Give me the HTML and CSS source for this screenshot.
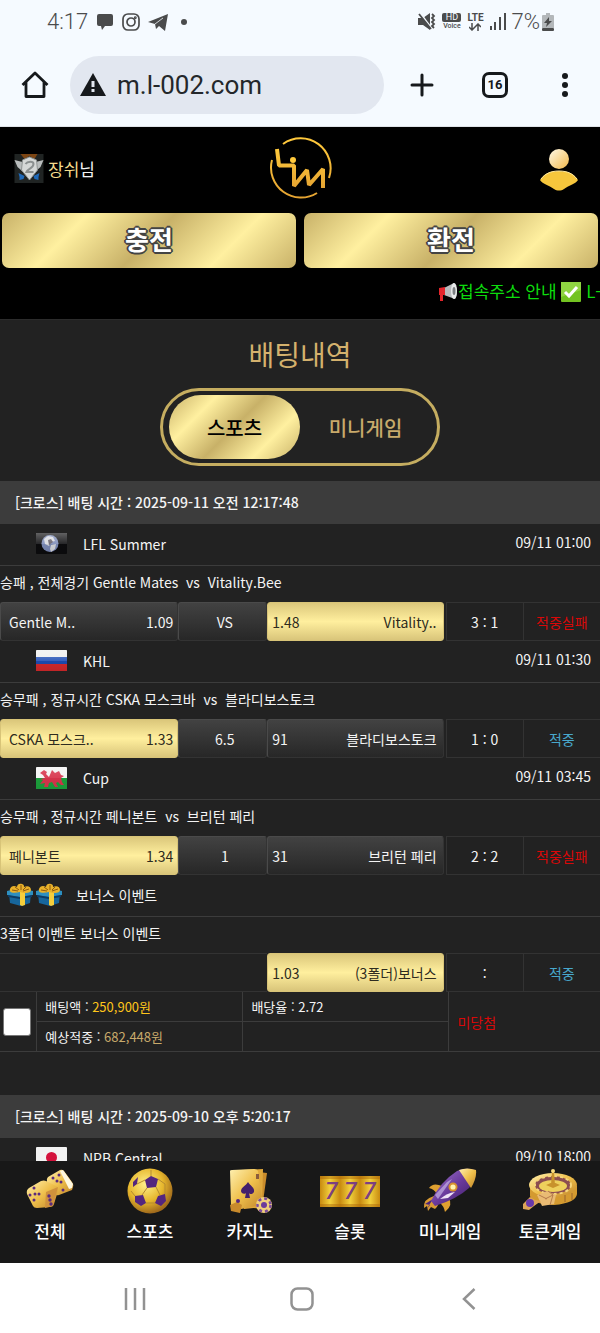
FILE: index.html
```
<!DOCTYPE html>
<html lang="ko">
<head>
  <meta charset="utf-8">
  <title>배팅내역</title>
  <meta name="viewport" content="width=device-width, initial-scale=1">
  <link rel="stylesheet" href="styles.css">
</head>
<body>
  <!-- shared gradients and symbols -->
  <svg class="defs" width="0" height="0" aria-hidden="true">
    <defs>
      <linearGradient id="gold" x1="0" y1="0" x2="1" y2="1">
        <stop offset="0" stop-color="#fff0b0"/><stop offset=".5" stop-color="#efc04c"/><stop offset="1" stop-color="#c0842a"/>
      </linearGradient>
      <linearGradient id="head" x1="0" y1="0" x2="1" y2="1">
        <stop offset="0" stop-color="#fffae8"/><stop offset="1" stop-color="#f2b84a"/>
      </linearGradient>
      <linearGradient id="logo-gold" x1="0" y1="0" x2="0" y2="1">
        <stop offset="0" stop-color="#ffc93c"/><stop offset="1" stop-color="#e5a432"/>
      </linearGradient>
      <linearGradient id="purple" x1="0" y1="0" x2="1" y2="1">
        <stop offset="0" stop-color="#a27bd0"/><stop offset=".5" stop-color="#6a3a9c"/><stop offset="1" stop-color="#3a1a60"/>
      </linearGradient>
      <radialGradient id="ball" cx=".4" cy=".35" r=".65">
        <stop offset="0" stop-color="#fff08a"/><stop offset=".6" stop-color="#e6b62c"/><stop offset="1" stop-color="#a06a1c"/>
      </radialGradient>
      <linearGradient id="slot" x1="0" y1="0" x2="1" y2="0">
        <stop offset="0" stop-color="#c88a10"/><stop offset=".5" stop-color="#f2d03c"/><stop offset="1" stop-color="#c88a10"/>
      </linearGradient>
      <linearGradient id="shine" x1="0" y1="0" x2="0" y2="1">
        <stop offset="0" stop-color="#fff" stop-opacity=".35"/><stop offset=".5" stop-color="#fff" stop-opacity=".12"/><stop offset=".52" stop-color="#000" stop-opacity=".05"/><stop offset="1" stop-color="#000" stop-opacity=".12"/>
      </linearGradient>
      <symbol id="gift" viewBox="0 0 28 23">
        <path d="M3 10h22l-1 10-9 3-11-3z" fill="#17669c"/>
        <path d="M1 8l13-3 13 3v4l-13 2-13-2z" fill="#2d8fc0"/>
        <path d="M2 12l12 2 12-2v2l-12 2-12-2z" fill="#0c3c66"/>
        <path d="M14 9h5v13l-3 1-2-1z" fill="#f5ce3c"/>
        <path d="M14 9C6 11 3 9 4 6s4-4 7-2C11 1 14 0 16 1s2 1 2 3c4-2 7 0 7 3s-5 4-11 2z" fill="#e8b12a"/>
        <path d="M6 7l6 1M23 6l-6 2M15 2v5M9 4l4 3M20 4l-3 3" stroke="#8e5a10" fill="none"/>
      </symbol>
    </defs>
  </svg>

  <div class="status-bar">
    <div class="status-left">
      <span class="clock">4:17</span>
      <svg width="18" height="18" viewBox="0 0 18 18"><path d="M3 1h12a2 2 0 0 1 2 2v8a2 2 0 0 1-2 2H9l-3 4-1-4H3a2 2 0 0 1-2-2V3a2 2 0 0 1 2-2z" fill="#4a4b4c"/></svg>
      <svg width="18" height="18" viewBox="0 0 18 18" fill="none" stroke="#4a4b4c" stroke-width="1.7"><rect x="1" y="1" width="16" height="16" rx="5"/><circle cx="9" cy="9" r="4"/><circle cx="13.3" cy="4.7" r=".6"/></svg>
      <svg width="20" height="18" viewBox="0 0 20 18"><path d="M0 9L20 1l-3 17-6-5-3 3-1-5z" fill="#4a4b4c"/><path d="M7 11l8-6" stroke="#f5faff" stroke-width=".8"/></svg>
      <span class="more-dot"></span>
    </div>
    <div class="status-right">
      <svg width="18" height="17" viewBox="0 0 18 17"><path d="M0 5h5l7-5v17l-7-5H0z" fill="#4a4b4c"/><path d="M2 0l12 16" stroke="#f5faff" stroke-width="2"/><path d="M1 1l12 15" stroke="#4a4b4c" stroke-width="1.8"/><path d="M14 1l2 2-2 2 2 2-2 2 2 2-2 2 2 2" fill="none" stroke="#4a4b4c" stroke-width="1.8"/></svg>
      <span class="hd"><b>HD</b><i>Voice</i></span>
      <span class="lte"><b>LTE</b><svg width="12" height="8" viewBox="0 0 12 8" fill="none" stroke="#4a4b4c" stroke-width="1.5"><path d="M3 0v7M0 4l3 3 3-3M9 8V1M6 4l3-3 3 3"/></svg></span>
      <svg width="16" height="17" viewBox="0 0 16 17" fill="#4a4b4c"><rect x="0" y="13" width="2" height="4"/><rect x="4" y="9" width="2" height="8"/><rect x="9" y="4" width="2" height="13"/><rect x="14" y="0" width="2" height="17"/></svg>
      <span class="percent">7%</span>
      <svg width="12" height="18" viewBox="0 0 12 18"><path d="M4 0h4v2h3a1 1 0 0 1 1 1v12H0V3a1 1 0 0 1 1-1h3z" fill="#b3b7ba"/><path d="M7 4L2 10h3l-1 4 6-6H7z" fill="#4a4b4c"/><rect y="15" width="12" height="3" rx="1" fill="#4a4b4c"/></svg>
    </div>
  </div>

  <div class="toolbar">
    <button class="tool home" aria-label="Home"><svg width="28" height="28" viewBox="0 0 28 28" fill="none" stroke="#16191c" stroke-width="2.8" stroke-linejoin="round"><path d="M1.500 14L14 2l12.500 12M5 11v14.500h18V11"/></svg></button>
    <div class="omnibox">
      <svg width="26" height="23" viewBox="0 0 26 23"><path d="M13 0l13 23H0z" fill="#16191c"/><path d="M13 8v6M13 16v3" stroke="#e2e7f0" stroke-width="3"/></svg>
      <input type="text" value="m.l-002.com" aria-label="Address">
    </div>
    <button class="tool plus" aria-label="New tab"><svg width="24" height="24" viewBox="0 0 24 24" stroke="#16191c" stroke-width="3" stroke-linecap="round"><path d="M12 2v20M2 12h20"/></svg></button>
    <button class="tool" aria-label="Tabs"><span class="tab-count">16</span></button>
    <button class="tool" aria-label="Menu"><svg width="6" height="24" viewBox="0 0 6 24" fill="#16191c"><circle cx="3" cy="3" r="3"/><circle cx="3" cy="12" r="3"/><circle cx="3" cy="21" r="3"/></svg></button>
  </div>

  <main class="page">
    <header class="header">
      <div class="user-row">
        <div class="user">
          <svg width="30" height="29" viewBox="0 0 29 29"><rect width="29" height="29" fill="#202423"/><path d="M6 0h17l-3 5-5-3-5 3z" fill="#7c4513"/><path d="M4 19l6 3-1 3-4 1 0-3zM25 19l-6 3 1 3 4 1 0-3z" fill="#1f69b8"/><path d="M0 6l8 2 3 12-8-7zM29 6l-8 2-3 12 8-7z" fill="#b9bdbd"/><path d="M15 3l7 3 1 10-8 10-8-10 1-10z" fill="#d5d8d7" stroke="#8f9493"/><path d="M11 10c2-3 8-3 8 0 0 4-5 4-7 8h7" fill="none" stroke="#8b9090" stroke-width="2"/></svg>
          <span><span class="user-name">장쉬</span>님</span>
        </div>
        <a href="#" class="logo" aria-label="LIM">
          <svg width="64" height="64" viewBox="0 0 64 64" fill="none" stroke="url(#logo-gold)" stroke-width="2">
            <path d="M15 8A30 30 0 0 1 61 42M49 57A30 30 0 0 1 4 24"/>
            <path d="M9 13l2 16.500h15L26 50l13-16 2 15 14-16v19" stroke-width="4" stroke-linejoin="bevel"/>
            <circle cx="25" cy="24" r="3" fill="#ffc93c" stroke="none"/>
          </svg>
        </a>
        <a href="#" class="profile" aria-label="내정보">
          <svg width="38" height="42" viewBox="0 0 38 42"><circle cx="19" cy="10" r="10" fill="url(#head)"/><path d="M0 31c4-6 9-9 19-9s15 3 19 9c-2 4-9 5-14 9-3 2-7 2-10 0C9 36 2 35 0 31z" fill="#f6c63c"/><path d="M1 30c4-5 9-8 18-8s14 3 18 8" fill="none" stroke="#ffe9a0"/></svg>
        </a>
      </div>
      <div class="money-buttons">
        <button>충전</button>
        <button>환전</button>
      </div>
      <div class="notice">
        <p>
          <svg width="20" height="20" viewBox="0 0 20 20"><path d="M6 6L16 1c3 2 4 13 1 16L6 13z" fill="#b8bbbd"/><ellipse cx="16" cy="9" rx="3" ry="8" fill="#e8eaea"/><ellipse cx="16" cy="9" rx="1.500" ry="4" fill="#7c8083"/><path d="M1 6l6-1v8H5v6H2v-6H1z" fill="#e4252c"/></svg>접속주소 안내
          <svg width="20" height="20" viewBox="0 0 20 20"><rect width="20" height="20" rx="1" fill="#73c321"/><path d="M0 0h20v8L0 15z" fill="#8fd442"/><path d="M4 10l4 4 8-9" fill="none" stroke="#fff" stroke-width="3"/></svg>
          L-
        </p>
      </div>
    </header>

    <h1>배팅내역</h1>
    <div class="tabs">
      <button class="active">스포츠</button>
      <button>미니게임</button>
    </div>

    <section class="bet">
      <h2>[크로스] 배팅 시간 : 2025-09-11 오전 12:17:48</h2>
      <table class="matches">
        <colgroup><col class="team"><col class="draw"><col class="team"><col class="score"><col class="score"></colgroup>
        <tr class="league">
          <td colspan="3"><div>
            <svg width="31" height="21" viewBox="0 0 31 21"><rect width="31" height="21" rx="1" fill="#0c0c0e"/><circle cx="14" cy="10.500" r="8.500" fill="#7c8bb8"/><path d="M8 6l4-3 5 1 2 4-4 1-2 4-4-2zM15 12l5-1-1 5-4 3-1-3z" fill="#d8dae0"/><path d="M12 7l3-1 2 3-4 3z" fill="#615c68"/><rect width="31" height="21" fill="url(#shine)"/></svg>
            LFL Summer</div></td>
          <td colspan="2" class="time">09/11 01:00</td>
        </tr>
        <tr class="detail"><td colspan="5">승패 , 전체경기 Gentle Mates &nbsp;vs&nbsp; Vitality.Bee</td></tr>
        <tr class="odds">
          <td class="pick"><div><span>Gentle M..</span><span>1.09</span></div></td>
          <td class="pick"><div class="mid">VS</div></td>
          <td class="pick away on"><div><span>1.48</span><span>Vitality..</span></div></td>
          <td class="cell">3 : 1</td>
          <td class="cell lose">적중실패</td>
        </tr>
        <tr class="league">
          <td colspan="3"><div>
            <svg width="31" height="21" viewBox="0 0 31 21"><rect width="31" height="21" rx="1" fill="#eee"/><rect y="7" width="31" height="7" fill="#1e4db4"/><rect y="14" width="31" height="7" fill="#da2a2c"/><rect width="31" height="21" fill="url(#shine)"/></svg>
            KHL</div></td>
          <td colspan="2" class="time">09/11 01:30</td>
        </tr>
        <tr class="detail"><td colspan="5">승무패 , 정규시간 CSKA 모스크바 &nbsp;vs&nbsp; 블라디보스토크</td></tr>
        <tr class="odds">
          <td class="pick on"><div><span>CSKA 모스크..</span><span>1.33</span></div></td>
          <td class="pick"><div class="mid">6.5</div></td>
          <td class="pick away"><div><span>91</span><span>블라디보스토크</span></div></td>
          <td class="cell">1 : 0</td>
          <td class="cell win">적중</td>
        </tr>
        <tr class="league">
          <td colspan="3"><div>
            <svg width="31" height="22" viewBox="0 0 31 22"><rect width="31" height="22" rx="1" fill="#f4f4f4"/><rect y="11" width="31" height="11" fill="#1ca03c"/><path d="M4 6l4-3 3 2-1 2 3 3 3-7 3 3 4-2 2 4 3 1-3 2 1 4 2 3h-3l-3-3-2 1 2 4h-3l-3-5-3 1-1 4H8l1-4-5 1 3-4-3-1 5-1-2-3z" fill="#d8344c"/><rect width="31" height="22" fill="url(#shine)" opacity=".5"/></svg>
            Cup</div></td>
          <td colspan="2" class="time">09/11 03:45</td>
        </tr>
        <tr class="detail"><td colspan="5">승무패 , 정규시간 페니본트 &nbsp;vs&nbsp; 브리턴 페리</td></tr>
        <tr class="odds">
          <td class="pick on"><div><span>페니본트</span><span>1.34</span></div></td>
          <td class="pick"><div class="mid">1</div></td>
          <td class="pick away"><div><span>31</span><span>브리턴 페리</span></div></td>
          <td class="cell">2 : 2</td>
          <td class="cell lose">적중실패</td>
        </tr>
        <tr class="league bonus">
          <td colspan="5"><div>
            <span class="gifts"><svg width="28" height="23"><use href="#gift"/></svg><svg width="28" height="23"><use href="#gift"/></svg></span>
            보너스 이벤트</div></td>
        </tr>
        <tr class="detail"><td colspan="5">3폴더 이벤트 보너스 이벤트</td></tr>
        <tr class="odds">
          <td colspan="2"></td>
          <td class="pick away on"><div><span>1.03</span><span>(3폴더)보너스</span></div></td>
          <td class="cell">:</td>
          <td class="cell win">적중</td>
        </tr>
      </table>
      <table class="summary">
        <colgroup><col class="check"><col class="sum"><col class="sum"><col class="result"></colgroup>
        <tr>
          <td rowspan="2" class="check-cell"><input type="checkbox" aria-label="배팅 선택"></td>
          <td>배팅액 : <span class="stake">250,900원</span></td>
          <td>배당율 : 2.72</td>
          <td rowspan="2" class="lose">미당첨</td>
        </tr>
        <tr>
          <td>예상적중 : <span class="payout">682,448원</span></td>
          <td></td>
        </tr>
      </table>
    </section>

    <section class="bet">
      <h2>[크로스] 배팅 시간 : 2025-09-10 오후 5:20:17</h2>
      <table class="matches">
        <colgroup><col class="team"><col class="draw"><col class="team"><col class="score"><col class="score"></colgroup>
        <tr class="league">
          <td colspan="3"><div>
            <svg width="31" height="21" viewBox="0 0 31 21"><rect width="31" height="21" rx="1" fill="#f2f2f2"/><circle cx="15.500" cy="10.500" r="5.500" fill="#d4123c"/></svg>
            NPB Central</div></td>
          <td colspan="2" class="time">09/10 18:00</td>
        </tr>
      </table>
    </section>
  </main>

  <nav class="bottom-nav">
    <a href="#">
      <svg width="48" height="46" viewBox="0 0 48 46"><path d="M22 9l12-7q2-1 4 1l8 11q2 3 1 5l-1 3-13 5q-3 1-4-1l-8-12q-1-3 1-5z" fill="url(#gold)"/><path d="M34 3l3-1 10 14-1 4-3 1z" fill="#fff8e0"/><path d="M3 20l12-7q3-1 5 0l10 5q3 2 2 5l-4 13q-1 3-4 3l-13 1q-3 0-4-2L1 26q-1-4 2-6z" fill="url(#gold)"/><path d="M20 24l12-5-5 19-8 2z" fill="#d0923c"/><g fill="#5a2a7c"><circle cx="8" cy="20" r="1.500"/><circle cx="4" cy="27" r="1.500"/><circle cx="13" cy="26" r="1.500"/><circle cx="8" cy="32" r="1.500"/><circle cx="9" cy="26" r="1.500"/><circle cx="23" cy="28" r="1.700"/><circle cx="24" cy="32" r="1.700"/><circle cx="25" cy="36" r="1.700"/><circle cx="27" cy="10" r="1.500"/><circle cx="33" cy="7" r="1.500"/><circle cx="31" cy="13" r="1.500"/><circle cx="35" cy="14" r="1.500"/><circle cx="37" cy="22" r="1.500"/></g></svg>
      전체
    </a>
    <a href="#">
      <svg width="46" height="46" viewBox="0 0 46 46"><circle cx="23" cy="23" r="22.500" fill="url(#ball)"/><path d="M18 12l6-4 7 3-2 8-9 1zM8 28l8-1 3 8-5 3-6-4zM38 26l-7 2-3 7 6 3 5-5zM6 14l5-5-1 7-4 3z" fill="#54267e"/><path d="M20 20l-5 7M29 19l4 8M19 35h9M18 12l-8 4M31 11l7 5 0 10M24 8V2M8 28l-4-5" fill="none" stroke="#b58a30"/></svg>
      스포츠
    </a>
    <a href="#">
      <svg width="46" height="46" viewBox="0 0 46 46"><path d="M22 3l18 2-5 36-18-2z" fill="#c98c2c"/><path d="M14 2l22-1-1 38-18 2z" fill="#e0a83c"/><path d="M3 3q0-1 2-1l22-1q3 0 4 2l5 34-22 4q-8 0-10-3z" fill="url(#gold)"/><path d="M21 14c2 4 7 5 6 10-1 2-4 3-5 1l1 5h-5l1-5c-2 2-5 0-5-2 0-4 5-5 7-9z" fill="#44206c"/><path d="M29 6h3v5h-3z" fill="#8a5c3c"/><path d="M3 37l7-3 5 3-2 8-9-2z" fill="#c88a2c"/><circle cx="11" cy="33" r="2" fill="#54267e"/><circle cx="37" cy="37" r="8" fill="#f0cf7c"/><circle cx="37" cy="37" r="6.500" fill="none" stroke="#7a4c9c" stroke-width="2.500" stroke-dasharray="3 3"/><circle cx="37" cy="37" r="3" fill="#6a3a9c"/></svg>
      카지노
    </a>
    <a href="#">
      <svg width="60" height="46" viewBox="0 0 60 46"><rect y="8" width="20" height="31" fill="url(#slot)"/><rect x="20" y="8" width="20" height="31" fill="url(#slot)"/><rect x="40" y="8" width="20" height="31" fill="url(#slot)"/><path d="M0 8h60v3H0zM0 36h60v3H0z" fill="#a86408" opacity=".45"/><g class="sevens"><text x="5" y="31">7</text><text x="24" y="31">7</text><text x="43" y="31">7</text></g></svg>
      슬롯
    </a>
    <a href="#">
      <svg width="54" height="46" viewBox="0 0 54 46"><path d="M19 18q-9-4-13 2 5 1 8 6zM25 29q6 8-3 15-1-6-6-10z" fill="#dfa030"/><path d="M11 28q-11 3-10 12l3-2 1 5 3-4 4 2q4-3 4-10z" fill="#d89a34"/><path d="M10 31l-8 5 5 1-4 5z" fill="#4c247c"/><path d="M8 33Q17 14 34 3q8-4 18-1 1 10-6 18-12 11-34 18z" fill="url(#purple)"/><path d="M36 2q8-3 17 0 1 8-5 18z" fill="url(#gold)"/><path d="M12 27l12-13 5-3-14 20z" fill="#c5b0e4" opacity=".7"/><path d="M17 31q7-6 15-7l-7 6z" fill="#efe2f6"/><circle cx="30" cy="19" r="4.500" fill="#d8902c"/><circle cx="30" cy="19" r="2.600" fill="#fff2b0"/></svg>
      미니게임
    </a>
    <a href="#">
      <svg width="56" height="46" viewBox="0 0 56 46"><path d="M8 18h47v8q-1 9-23 11Q9 36 8 28z" fill="#d49a30"/><ellipse cx="31" cy="17" rx="24" ry="12" fill="url(#gold)"/><ellipse cx="31" cy="17" rx="18" ry="9" fill="#8c4d50"/><ellipse cx="31" cy="17" rx="18" ry="9" fill="none" stroke="#f6d67c" stroke-width="2" stroke-dasharray="3 3"/><ellipse cx="31" cy="18" rx="14" ry="6" fill="#eed05c"/><path d="M30 3h2l1 14h-4zM24 17l7-3 7 3-7 3z" fill="#c8922c"/><circle cx="31" cy="3" r="2" fill="#f8dc80"/><path d="M15 27l10-4 9 4-2 9-12 2z" fill="#e9bb74"/><path d="M26 23l5 4-3 10M17 27l8 4M23 31l8-4" fill="none" stroke="#b67c4c"/><path d="M1 36l7-7 5 3 6 1-7 5-5 4-6-1z" fill="#dca458"/><circle cx="8" cy="35" r="4" fill="#6738aa"/><path d="M43 27v7M50 25v7" stroke="#9a652c"/></svg>
      토큰게임
    </a>
  </nav>

  <div class="system-nav">
    <button aria-label="Recent apps"><svg width="22" height="24" viewBox="0 0 22 24" stroke="#929292" stroke-width="2.500"><path d="M2 1v22M11 1v22M20 1v22"/></svg></button>
    <button aria-label="Home"><svg width="24" height="24" viewBox="0 0 24 24" fill="none" stroke="#929292" stroke-width="2.500"><rect x="1.500" y="1.500" width="21" height="21" rx="6"/></svg></button>
    <button aria-label="Back"><svg width="14" height="24" viewBox="0 0 14 24" fill="none" stroke="#929292" stroke-width="2.500"><path d="M12.500 2L2 12l10.500 10"/></svg></button>
  </div>
</body>
</html>
```

FILE: styles.css
```
* {
  box-sizing: border-box;
}

body {
  display: flex;
  flex-direction: column;
  height: 100vh;
  margin: 0;
  overflow: hidden;
  background: #222;
  color: #f4f4f4;
  font-family: "Noto Sans CJK KR", sans-serif;
  font-size: 14px;
}

button {
  border: 0;
  padding: 0;
  background: none;
  font-family: inherit;
  cursor: pointer;
}

.defs {
  position: absolute;
}

/* phone status bar */
.status-bar {
  display: flex;
  flex: none;
  justify-content: space-between;
  height: 43px;
  padding: 0 46px 0 47px;
  background: #f5faff;
  color: #4a4b4c;
  font-family: Roboto, sans-serif;
  font-size: 22px;
  font-weight: 300;
}

.status-left,
.status-right {
  display: flex;
  align-items: center;
}

.status-left {
  gap: 8px;
}

.status-right {
  gap: 6px;
}

.percent {
  margin-right: -4px;
}

.more-dot {
  width: 6px;
  height: 6px;
  margin-left: 5px;
  border-radius: 50%;
  background: #4a4b4c;
}

.hd,
.lte {
  display: flex;
  flex-direction: column;
  align-items: center;
}

.hd b {
  width: 19px;
  border-radius: 2px;
  background: #4a4b4c;
  color: #f5faff;
  font-size: 9px;
  line-height: 9px;
  text-align: center;
}

.hd i {
  font-size: 7px;
  font-style: normal;
  font-weight: 500;
  line-height: 8px;
}

.lte b {
  font-size: 10px;
  font-weight: 700;
  line-height: 10px;
}

/* browser toolbar */
.toolbar {
  display: flex;
  flex: none;
  align-items: center;
  height: 84px;
  border-bottom: 1px solid #dfe3e8;
  background: #f5faff;
}

.tool {
  display: flex;
  align-items: center;
  justify-content: center;
  width: 70px;
  height: 58px;
}

.plus {
  width: 76px;
}

.omnibox {
  display: flex;
  flex: 1;
  align-items: center;
  gap: 11px;
  min-width: 0;
  height: 58px;
  padding: 0 20px 0 10px;
  border-radius: 29px;
  background: #e2e7f0;
}

.omnibox input {
  flex: 1;
  min-width: 0;
  border: 0;
  padding: 0;
  background: none;
  color: #24272a;
  font-family: Roboto, sans-serif;
  font-size: 26px;
}

.tab-count {
  width: 26px;
  height: 26px;
  border: 3px solid #16191c;
  border-radius: 7px;
  color: #16191c;
  font-family: Roboto, sans-serif;
  font-size: 13px;
  font-weight: 700;
  line-height: 20px;
}

/* site */
.page {
  flex: 1;
  min-height: 0;
  overflow: hidden;
}

.header {
  border-bottom: 1px solid #2c2c2c;
  background: #000;
}

.user-row {
  display: grid;
  grid-template-columns: 1fr auto 1fr;
  align-items: center;
  height: 86px;
  padding: 0 14px 4px;
}

.user {
  display: flex;
  align-items: center;
  gap: 4px;
  font-size: 17px;
}

.user-name {
  color: #f4dc8c;
}

.logo,
.profile {
  display: flex;
}

.profile {
  justify-self: end;
  padding: 4px 8px 0 0;
}

.money-buttons {
  display: flex;
  gap: 8px;
  padding: 0 2px;
}

.money-buttons button {
  flex: 1;
  height: 55px;
  padding-bottom: 3px;
  border-radius: 7px;
  color: #fff;
  font-size: 26px;
  font-weight: 700;
  line-height: 52px;
  text-shadow: -2px 0 0 #444, 2px 0 0 #444, 0 -2px 0 #444, 0 2px 0 #444, -1px -1px 0 #444, 1px -1px 0 #444, -1px 1px 0 #444, 1px 1px 0 #444;
}

.money-buttons button,
.tabs .active {
  background: linear-gradient(135deg, #c8b168, #fff0a0 25%, #c8b168 50%, #fff0a0 75%, #c8b168);
}

.notice {
  height: 51px;
  overflow: hidden;
}

.notice p {
  margin: 0 0 0 73%;
  color: #0ddc0d;
  font-size: 17px;
  line-height: 46px;
  white-space: nowrap;
}

.notice svg {
  vertical-align: -4px;
}

h1 {
  margin: 14px 0;
  color: #d4b16d;
  font-size: 28px;
  font-weight: 400;
  line-height: 40px;
  text-align: center;
}

.tabs {
  display: flex;
  width: 280px;
  height: 78px;
  margin: 0 auto 15px;
  padding: 4px 6px;
  border: 3px solid #c5ad60;
  border-radius: 39px;
}

.tabs button {
  flex: 1;
  border-radius: 32px;
  color: #c8aa6b;
  font-size: 20px;
  font-weight: 500;
}

.tabs .active {
  color: #000;
}

.bet {
  margin-bottom: 43px;
}

.bet h2 {
  margin: 0;
  padding-left: 15px;
  background: #3c3c3c;
  font-size: 14px;
  font-weight: 500;
  line-height: 43px;
}

table {
  width: 100%;
  border-collapse: separate;
  border-spacing: 0;
  table-layout: fixed;
}

td {
  padding: 0;
  white-space: nowrap;
}

.team {
  width: 30%;
}

.draw {
  width: 15%;
}

.score {
  width: 13%;
}

.league td {
  height: 42px;
  padding-bottom: 2px;
  border-bottom: 1px solid #3c3c3c;
}

.league div {
  display: flex;
  align-items: center;
  gap: 16px;
  padding-left: 36px;
}

.league.bonus div {
  gap: 13px;
  padding-left: 6px;
}

.gifts {
  display: flex;
  gap: 1px;
}

.league .time {
  padding: 0 9px 6px 0;
  text-align: right;
}

.detail td {
  height: 36px;
  padding-bottom: 4px;
}

.odds td {
  height: 39px;
  border-top: 1px solid #333;
  border-bottom: 1px solid #333;
}

.odds .pick {
  border: 0;
}

.odds .away {
  padding-right: 2px;
}

.pick div {
  display: flex;
  align-items: center;
  justify-content: space-between;
  height: 39px;
  padding: 0 4px 0 8px;
  border: 1px solid #4a4a4a;
  border-right-color: #333;
  border-bottom-color: #333;
  border-radius: 3px;
  background: linear-gradient(#424242, #272727);
}

.pick .mid {
  justify-content: center;
}

.pick.away div {
  padding: 0 6px 0 4px;
}

.pick.on div {
  border-color: #d8c478;
  background: linear-gradient(#dbc77b, #ffef9e 50%, #d9c57a);
  color: #2e2b20;
}

.odds .cell {
  border-left: 1px solid #333;
  text-align: center;
}

.odds .lose,
.summary .lose {
  color: #d90808;
  font-size: 14px;
}

.odds .win {
  color: #48a8cc;
}

.check {
  width: 6%;
}

.sum {
  width: 34%;
}

.result {
  width: 25%;
}

.summary td {
  height: 30px;
  padding-left: 8px;
  border-bottom: 1px solid #3c3c3c;
  border-left: 1px solid #3c3c3c;
  font-size: 13px;
}

.summary .check-cell {
  padding: 0 0 0 3px;
  border-left: 0;
}

.check-cell input {
  appearance: none;
  display: block;
  width: 28px;
  height: 28px;
  margin: 0;
  border: 1px solid #777;
  border-radius: 3px;
  background: #fff;
}

.stake {
  color: #ffc61a;
}

.payout {
  color: #c8aa6b;
}

/* bottom menu */
.bottom-nav {
  display: grid;
  flex: none;
  grid-template-columns: repeat(6, 1fr);
  height: 102px;
  padding-top: 7px;
  background: #181818;
}

.bottom-nav a {
  display: flex;
  flex-direction: column;
  align-items: center;
  color: #fff;
  font-size: 17px;
  font-weight: 500;
  line-height: 34px;
  text-decoration: none;
}

.sevens {
  fill: #7c4080;
  font-family: Roboto, sans-serif;
  font-size: 23px;
  font-style: italic;
  font-weight: 500;
}

.system-nav {
  display: grid;
  flex: none;
  grid-template-columns: repeat(3, 28%);
  justify-content: center;
  height: 70px;
  padding: 5px 0 0 4px;
  background: #fff;
}
```
